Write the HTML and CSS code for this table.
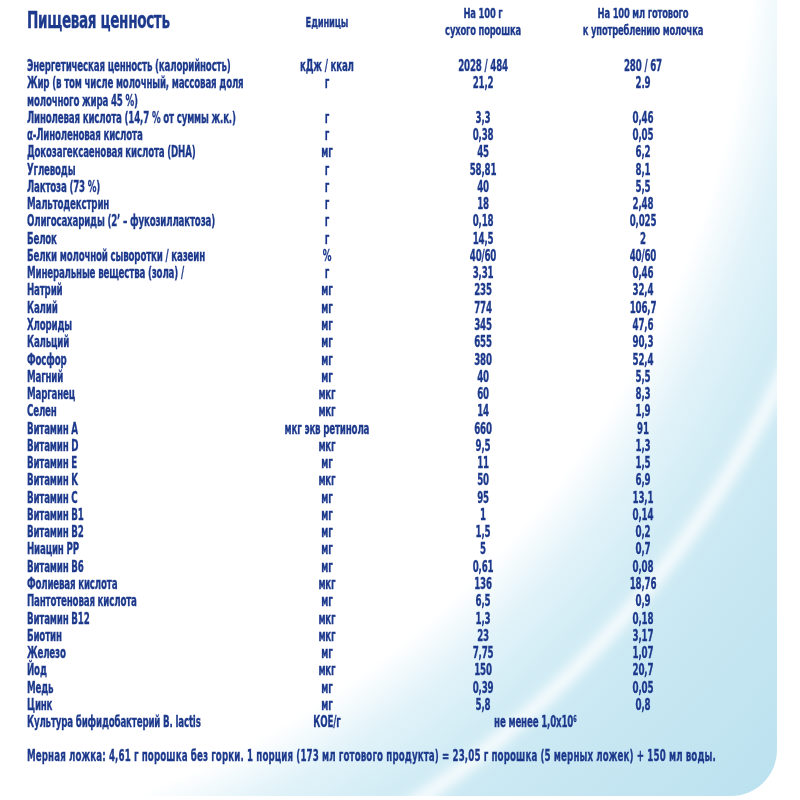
FILE: index.html
```html
<!DOCTYPE html>
<html lang="ru">
<head>
<meta charset="utf-8">
<link rel="stylesheet" href="styles.css">
</head>
<body>
<div class="sheet">
 <svg class="swoosh" width="777" height="796" viewBox="0 0 777 796" aria-hidden="true">
  <defs>
   <radialGradient id="sea" gradientUnits="userSpaceOnUse" cx="-200" cy="-100" r="1300">
    <stop offset="0.735" stop-color="#ffffff"/>
    <stop offset="0.775" stop-color="#e2f3f9"/>
    <stop offset="0.82" stop-color="#d2ecf5"/>
    <stop offset="0.89" stop-color="#c7e7f2"/>
    <stop offset="1" stop-color="#bde2ef"/>
   </radialGradient>
   <filter id="soft" x="-10%" y="-10%" width="120%" height="120%">
    <feGaussianBlur stdDeviation="6"/>
   </filter>
   <clipPath id="panel">
    <path d="M0 0H777V750A46 46 0 0 1 731 796H0Z"/>
   </clipPath>
  </defs>
  <g clip-path="url(#panel)">
   <rect width="777" height="796" fill="url(#sea)"/>
   <circle cx="-200" cy="-100" r="1092" fill="none" stroke="#ffffff" stroke-opacity="0.85" stroke-width="14" filter="url(#soft)"/>
  </g>
 </svg>
 <div class="content">
  <div class="head">
    <div class="title">Пищевая ценность</div>
    <div class="hunit">Единицы</div>
    <div class="hcol"><span>На 100 г</span><span>сухого порошка</span></div>
    <div class="hcol"><span>На 100 мл готового</span><span>к употреблению молочка</span></div>
  </div>
  <div class="table">
    <div class="row"><div class="n">Энергетическая ценность (калорийность)</div><div class="u">кДж / ккал</div><div class="v">2028 / 484</div><div class="v">280 / 67</div></div>
    <div class="row"><div class="n">Жир (в том числе молочный, массовая доля<br>молочного жира 45 %)</div><div class="u">г</div><div class="v">21,2</div><div class="v">2.9</div></div>
    <div class="row"><div class="n">Линолевая кислота (14,7 % от суммы ж.к.)</div><div class="u">г</div><div class="v">3,3</div><div class="v">0,46</div></div>
    <div class="row"><div class="n">α-Линоленовая кислота</div><div class="u">г</div><div class="v">0,38</div><div class="v">0,05</div></div>
    <div class="row"><div class="n">Докозагексаеновая кислота (DHA)</div><div class="u">мг</div><div class="v">45</div><div class="v">6,2</div></div>
    <div class="row"><div class="n">Углеводы</div><div class="u">г</div><div class="v">58,81</div><div class="v">8,1</div></div>
    <div class="row"><div class="n">Лактоза (73 %)</div><div class="u">г</div><div class="v">40</div><div class="v">5,5</div></div>
    <div class="row"><div class="n">Мальтодекстрин</div><div class="u">г</div><div class="v">18</div><div class="v">2,48</div></div>
    <div class="row"><div class="n">Олигосахариды (2’ – фукозиллактоза)</div><div class="u">г</div><div class="v">0,18</div><div class="v">0,025</div></div>
    <div class="row"><div class="n">Белок</div><div class="u">г</div><div class="v">14,5</div><div class="v">2</div></div>
    <div class="row"><div class="n">Белки молочной сыворотки / казеин</div><div class="u">%</div><div class="v">40/60</div><div class="v">40/60</div></div>
    <div class="row"><div class="n">Минеральные вещества (зола) /</div><div class="u">г</div><div class="v">3,31</div><div class="v">0,46</div></div>
    <div class="row"><div class="n">Натрий</div><div class="u">мг</div><div class="v">235</div><div class="v">32,4</div></div>
    <div class="row"><div class="n">Калий</div><div class="u">мг</div><div class="v">774</div><div class="v">106,7</div></div>
    <div class="row"><div class="n">Хлориды</div><div class="u">мг</div><div class="v">345</div><div class="v">47,6</div></div>
    <div class="row"><div class="n">Кальций</div><div class="u">мг</div><div class="v">655</div><div class="v">90,3</div></div>
    <div class="row"><div class="n">Фосфор</div><div class="u">мг</div><div class="v">380</div><div class="v">52,4</div></div>
    <div class="row"><div class="n">Магний</div><div class="u">мг</div><div class="v">40</div><div class="v">5,5</div></div>
    <div class="row"><div class="n">Марганец</div><div class="u">мкг</div><div class="v">60</div><div class="v">8,3</div></div>
    <div class="row"><div class="n">Селен</div><div class="u">мкг</div><div class="v">14</div><div class="v">1,9</div></div>
    <div class="row"><div class="n">Витамин A</div><div class="u">мкг экв ретинола</div><div class="v">660</div><div class="v">91</div></div>
    <div class="row"><div class="n">Витамин D</div><div class="u">мкг</div><div class="v">9,5</div><div class="v">1,3</div></div>
    <div class="row"><div class="n">Витамин E</div><div class="u">мг</div><div class="v">11</div><div class="v">1,5</div></div>
    <div class="row"><div class="n">Витамин K</div><div class="u">мкг</div><div class="v">50</div><div class="v">6,9</div></div>
    <div class="row"><div class="n">Витамин C</div><div class="u">мг</div><div class="v">95</div><div class="v">13,1</div></div>
    <div class="row"><div class="n">Витамин B1</div><div class="u">мг</div><div class="v">1</div><div class="v">0,14</div></div>
    <div class="row"><div class="n">Витамин B2</div><div class="u">мг</div><div class="v">1,5</div><div class="v">0,2</div></div>
    <div class="row"><div class="n">Ниацин PP</div><div class="u">мг</div><div class="v">5</div><div class="v">0,7</div></div>
    <div class="row"><div class="n">Витамин B6</div><div class="u">мг</div><div class="v">0,61</div><div class="v">0,08</div></div>
    <div class="row"><div class="n">Фолиевая кислота</div><div class="u">мкг</div><div class="v">136</div><div class="v">18,76</div></div>
    <div class="row"><div class="n">Пантотеновая кислота</div><div class="u">мг</div><div class="v">6,5</div><div class="v">0,9</div></div>
    <div class="row"><div class="n">Витамин B12</div><div class="u">мкг</div><div class="v">1,3</div><div class="v">0,18</div></div>
    <div class="row"><div class="n">Биотин</div><div class="u">мкг</div><div class="v">23</div><div class="v">3,17</div></div>
    <div class="row"><div class="n">Железо</div><div class="u">мг</div><div class="v">7,75</div><div class="v">1,07</div></div>
    <div class="row"><div class="n">Йод</div><div class="u">мкг</div><div class="v">150</div><div class="v">20,7</div></div>
    <div class="row"><div class="n">Медь</div><div class="u">мг</div><div class="v">0,39</div><div class="v">0,05</div></div>
    <div class="row"><div class="n">Цинк</div><div class="u">мг</div><div class="v">5,8</div><div class="v">0,8</div></div>
    <div class="row"><div class="n">Культура бифидобактерий B. lactis</div><div class="u">КОЕ/г</div><div class="v span">не менее 1,0x10<sup>6</sup></div></div>
  </div>
  <p class="note">Мерная ложка: 4,61 г порошка без горки. 1 порция (173 мл готового продукта) = 23,05 г порошка (5 мерных ложек) + 150 мл воды.</p>
 </div>
</div>
</body>
</html>
```

FILE: styles.css
```css
html {
  overflow: hidden;
  background: #ffffff;
}

body {
  margin: 0;
  padding: 0;
  font-family: "DejaVu Sans Condensed", "DejaVu Sans", sans-serif;
  font-weight: bold;
  color: #1d398c;
  font-size: 15px;
  letter-spacing: -0.3px;
  -webkit-text-stroke: 0.3px #1d398c;
}

.sheet {
  position: relative;
  width: 750px;
  height: 796px;
  padding-left: 27px;
  background-color: #ffffff;
}

/* pale blue printed swoosh behind the table */
.swoosh {
  position: absolute;
  left: 0;
  top: 0;
  display: block;
  z-index: 0;
}

/* the print uses a tightly condensed face; squeeze the whole text block horizontally */
.content {
  position: relative;
  z-index: 1;
  width: 1040px;
  transform: scaleX(0.645);
  transform-origin: 0 0;
}

.head {
  display: grid;
  grid-template-columns: 390px 150px 334px 162px;
  height: 58px;
  padding-top: 5px;
  box-sizing: border-box;
  align-items: start;
}

.title {
  font-size: 23.5px;
  line-height: 30px;
  letter-spacing: -0.6px;
  white-space: nowrap;
}

.hunit {
  text-align: center;
  line-height: 17px;
  margin-top: 9px;
  font-size: 14.5px;
}

.hcol {
  display: flex;
  flex-direction: column;
  align-items: center;
  line-height: 17px;
  font-size: 14.5px;
  white-space: nowrap;
}

.table {
  display: flex;
  flex-direction: column;
}

.row {
  display: grid;
  grid-template-columns: 390px 150px 334px 162px;
  line-height: 17.26px;
}

.n {
  white-space: nowrap;
}

.u, .v {
  text-align: center;
  white-space: nowrap;
}

.span {
  grid-column: 3 / 5;
}

sup {
  font-size: 8.5px;
  line-height: 0;
  vertical-align: 5px;
}

.note {
  margin: 17px 0 0 0;
  line-height: 17.26px;
  white-space: nowrap;
  letter-spacing: 0.15px;
}
```
